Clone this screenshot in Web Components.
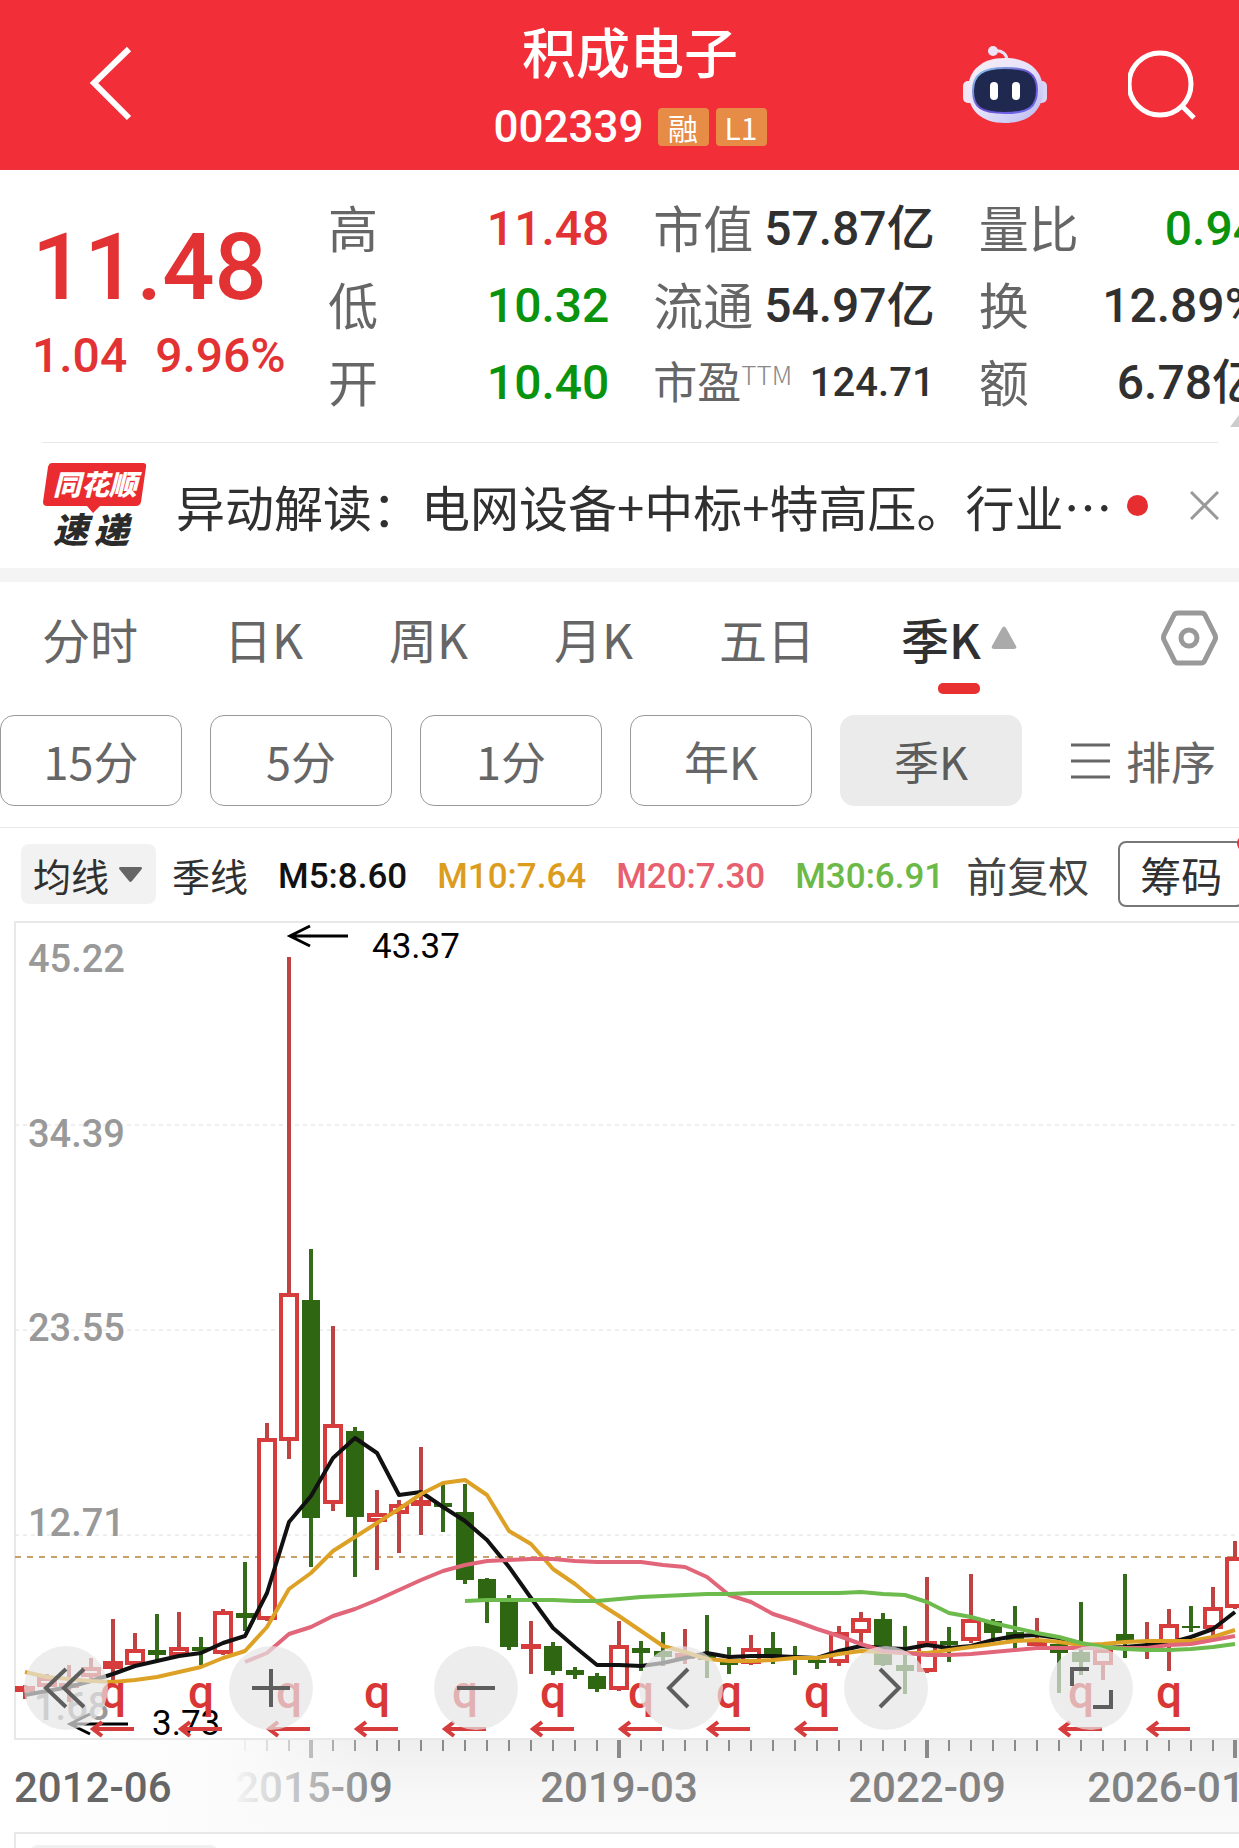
<!DOCTYPE html>
<html lang="zh-CN">
<head>
<meta charset="utf-8">
<meta name="viewport" content="width=device-width, initial-scale=1">
<title>积成电子 002339</title>
<style>
  :root {
    --cjk: "Noto Sans CJK SC", sans-serif;
    --num: Roboto, "Noto Sans CJK SC", sans-serif;
    --brand: #f22f38;
    --up: #e23234;
    --down: #0a930c;
    --ink: #303030;
    --muted: #666;
    --line: #e8e8e8;
  }

  body {
    margin: 0;
    height: 100vh;
    overflow: hidden;
    background: #fff;
    color: var(--ink);
    font-family: var(--cjk);
  }
</style>
</head>
<body>

<quote-header name="积成电子" code="002339">
  <span slot="badge">融</span>
  <span slot="badge">L1</span>
</quote-header>
<quote-board></quote-board>
<news-strip>异动解读：电网设备+中标+特高压。行业…</news-strip>
<period-tabs></period-tabs>
<period-chips></period-chips>
<ma-legend></ma-legend>
<kline-chart></kline-chart>
<time-axis></time-axis>
<sub-chart></sub-chart>

<script>
const RESET = `
  button {
    margin: 0;
    padding: 0;
    border: 0;
    background: none;
    color: inherit;
    font: inherit;
    white-space: nowrap;
    cursor: pointer;
  }
  svg { display: block; }
`;

class BaseElement extends HTMLElement {
  constructor() {
    super();
    this.attachShadow({ mode: 'open' });
  }

  connectedCallback() {
    this.shadowRoot.innerHTML = `<style>${RESET}${this.styles()}</style>${this.markup()}`;
  }

  styles() { return ''; }
  markup() { return ''; }
}

class QuoteHeader extends BaseElement {
  styles() {
    return `
      :host {
        display: grid;
        grid-template-columns: 1fr auto 1fr;
        align-items: center;
        box-sizing: border-box;
        height: 170px;
        padding: 0 43px 0 64px;
        background: var(--brand);
        color: #fff;
      }
      .back { justify-self: start; }
      .title { display: grid; justify-items: center; gap: 12px; }
      h1 { margin: 0; font-size: 54px; font-weight: 500; line-height: 72px; }
      .code { display: flex; align-items: center; gap: 7px; font: 500 44px/56px var(--num); }
      .code b { margin-right: 7px; font-weight: 500; }
      ::slotted(span) {
        min-width: 51px;
        border-radius: 4px;
        background: #e68c46;
        font: 400 30px/38px var(--cjk);
        text-align: center;
      }
      .actions { display: flex; justify-content: flex-end; gap: 81px; }
    `;
  }

  markup() {
    return `
      <button class="back" type="button" aria-label="返回">
        <svg width="94" height="100" viewBox="0 0 94 100" fill="none" stroke="#fff" stroke-width="6"><path d="M65 14 30 48l35 35"/></svg>
      </button>
      <div class="title">
        <h1>${this.getAttribute('name')}</h1>
        <div class="code"><b>${this.getAttribute('code')}</b><slot name="badge"></slot></div>
      </div>
      <div class="actions">
        <button type="button" aria-label="智能助手">
          <svg width="84" height="78" viewBox="0 0 84 78">
            <defs>
              <linearGradient id="shell" x1="0" y1="0" x2="1" y2="1">
                <stop offset="0" stop-color="#fbeef4"/><stop offset=".5" stop-color="#e4e2fa"/><stop offset="1" stop-color="#b9b8ee"/>
              </linearGradient>
              <linearGradient id="rim" x1="0" y1="0" x2="1" y2="1">
                <stop offset="0" stop-color="#8fd6ef"/><stop offset=".5" stop-color="#6a4fd0"/><stop offset="1" stop-color="#6d6cf0"/>
              </linearGradient>
            </defs>
            <path d="M31 5c8-1 13 3 13 10" fill="none" stroke="#efe2f3" stroke-width="3"/>
            <circle cx="30" cy="5" r="5" fill="#eee3f8"/>
            <rect x="0" y="35" width="12" height="22" rx="5" fill="#f1e6f4"/>
            <rect x="72" y="35" width="12" height="22" rx="5" fill="#d9d4f6"/>
            <path d="M42 12c24 0 38 13 38 32 0 20-14 33-38 33S5 64 5 44c0-19 13-32 37-32Z" fill="url(#shell)"/>
            <path d="M42 22c22 0 32 5 32 22 0 17-8 23-32 23S10 61 10 45c0-17 10-23 32-23Z" fill="#1f2950" stroke="url(#rim)" stroke-width="2"/>
            <rect x="27" y="36" width="8" height="18" rx="4" fill="#fff"/>
            <rect x="49" y="36" width="8" height="18" rx="4" fill="#fff"/>
          </svg>
        </button>
        <button type="button" aria-label="搜索">
          <svg width="68" height="70" viewBox="0 0 68 70" fill="none" stroke="#fff" stroke-width="5"><circle cx="32" cy="34" r="31"/><path d="m54 56 12 12"/></svg>
        </button>
      </div>
    `;
  }
}

const QUOTES = [
  ['高', '11.48', 'up'], ['市值', '57.87亿'], ['量比', '0.94', 'down'],
  ['低', '10.32', 'down'], ['流通', '54.97亿'], ['换', '12.89%'],
  ['开', '10.40', 'down'], ['市盈', '124.71', 'small'], ['额', '6.78亿'],
];

class QuoteBoard extends BaseElement {
  styles() {
    return `
      :host { display: block; overflow: hidden; }
      .board { display: flex; height: 272px; }
      .last {
        flex: 0 0 310px;
        box-sizing: border-box;
        padding: 48px 0 0 32px;
        color: var(--up);
        font: 500 48px/60px var(--num);
        white-space: nowrap;
      }
      .price { margin-bottom: 8px; font-size: 92px; line-height: 100px; }
      .change { display: flex; gap: 28px; }
      /* the third column runs past the edge of the screen */
      dl {
        flex: 1;
        display: grid;
        grid-template-columns: repeat(3, 1fr);
        column-gap: 44px;
        align-content: start;
        margin: 0 -21px 0 18px;
        padding-top: 20px;
      }
      dl div { display: flex; justify-content: space-between; align-items: center; height: 77px; white-space: nowrap; }
      dt { height: 77px; color: var(--muted); font-size: 50px; line-height: 72px; }
      dd { margin: 0; font: 500 48px/77px var(--num); }
      .up { color: var(--up); }
      .down { color: var(--down); }
      .small dt { display: flex; font-size: 44px; }
      .small dd { font-size: 40px; }
      .small sup { font-size: 26px; line-height: 60px; color: #888; font-weight: 300; }
      hr { margin: 0 21px 0 42px; border: 0; border-top: 1px solid var(--line); }
      .more { position: absolute; right: 0; top: 415px; }
    `;
  }

  markup() {
    const cells = QUOTES.map(([label, value, kind = '']) => `
      <div class="${kind}"><dt>${label}${kind === 'small' ? '<sup>TTM</sup>' : ''}</dt><dd class="${kind}">${value}</dd></div>
    `).join('');
    return `
      <div class="board">
        <div class="last">
          <div class="price">11.48</div>
          <div class="change"><span>1.04</span><span>9.96%</span></div>
        </div>
        <dl>${cells}</dl>
      </div>
      <svg class="more" width="9" height="12" viewBox="0 0 9 12"><path d="M9 0v12H0z" fill="#ccc"/></svg>
      <hr>
    `;
  }
}

class NewsStrip extends BaseElement {
  styles() {
    return `
      :host {
        display: flex;
        align-items: center;
        height: 125px;
        padding: 0 20px 0 42px;
        border-bottom: 14px solid #f4f4f4;
      }
      svg { flex: none; }
      svg text { font-family: var(--cjk); font-weight: 900; font-style: italic; }
      a {
        flex: 1;
        min-width: 0;
        margin-left: 29px;
        color: var(--ink);
        font-size: 49px;
        line-height: 72px;
        text-decoration: none;
        white-space: nowrap;
      }
      .dot { width: 21px; height: 21px; margin-right: 42px; border-radius: 50%; background: #e62e31; }
    `;
  }

  markup() {
    return `
      <svg width="105" height="90" viewBox="0 0 105 90" role="img" aria-label="同花顺速递">
        <path d="M10 2h91q4 0 3 4l-5 35q-1 4-5 4H58l-7 7-6-7H5q-4 0-4-4L6 6q1-4 4-4Z" fill="#ea2c30"/>
        <text x="11" y="34" font-size="28" fill="#fff">同花顺</text>
        <text x="11" y="82" font-size="35" fill="#2b2b2b">速</text>
        <text x="52" y="82" font-size="35" fill="#2b2b2b">递</text>
      </svg>
      <a href="#"><slot></slot></a>
      <span class="dot"></span>
      <button type="button" aria-label="关闭">
        <svg width="29" height="29" viewBox="0 0 29 29" stroke="#999" stroke-width="3"><path d="m1 1 27 27M28 1 1 28"/></svg>
      </button>
    `;
  }
}

class PeriodTabs extends BaseElement {
  styles() {
    return `
      :host { display: flex; align-items: start; padding: 26px 21px 0 42px; }
      nav { flex: 1; display: flex; gap: 86px; }
      nav button { display: grid; justify-items: center; gap: 15px; color: var(--muted); font-size: 48px; line-height: 60px; }
      nav button span { display: flex; align-items: center; gap: 10px; }
      nav button::after { content: ""; width: 42px; height: 11px; border-radius: 5px; }
      nav .active { color: var(--ink); font-weight: 500; }
      nav .active::after { background: #e93030; }
      .settings { margin-top: 2px; }
    `;
  }

  markup() {
    const tabs = ['分时', '日K', '周K', '月K', '五日'].map((name) => `<button type="button"><span>${name}</span></button>`).join('');
    return `
      <nav>
        ${tabs}
        <button class="active" type="button"><span>季K<svg width="26" height="24" viewBox="0 0 26 24"><path d="M11 2q2-3 4 0l10 18q1 3-2 3H3q-3 0-2-3Z" fill="#aaa"/></svg></span></button>
      </nav>
      <button class="settings" type="button" aria-label="设置">
        <svg width="57" height="56" viewBox="0 0 57 56" fill="none" stroke="#999" stroke-width="5"><path d="M17 3h23q3 0 4 2l10 20q1 3 0 5L44 50q-1 3-4 3H17q-3 0-4-3L3 30q-1-2 0-5L13 5q1-2 4-2Z"/><circle cx="28" cy="28" r="8"/></svg>
      </button>
    `;
  }
}

class PeriodChips extends BaseElement {
  styles() {
    return `
      :host {
        display: flex;
        align-items: center;
        gap: 28px;
        padding: 21px 23px 21px 0;
        border-bottom: 1px solid var(--line);
        color: var(--muted);
        font-size: 45px;
      }
      .chip {
        flex: 0 0 182px;
        height: 91px;
        box-sizing: border-box;
        border: 1px solid #999;
        border-radius: 14px;
      }
      .active { border-color: #ebebeb; background: #ebebeb; color: #5c5c5c; }
      .sort { flex: 1; display: flex; align-items: center; justify-content: flex-end; gap: 16px; }
    `;
  }

  markup() {
    return `
      ${['15分', '5分', '1分', '年K'].map((name) => `<button class="chip" type="button">${name}</button>`).join('')}
      <button class="chip active" type="button">季K</button>
      <button class="sort" type="button">
        <svg width="39" height="36" viewBox="0 0 39 36" stroke="#666" stroke-width="3"><path d="M0 2h39M0 18h39M0 34h39"/></svg>排序
      </button>
    `;
  }
}

class MaLegend extends BaseElement {
  styles() {
    return `
      :host { display: flex; align-items: center; height: 92px; padding-left: 21px; overflow: hidden; white-space: nowrap; }
      .kind {
        display: flex;
        align-items: center;
        gap: 10px;
        height: 60px;
        margin-right: 16px;
        padding: 0 14px 0 12px;
        border-radius: 8px;
        background: #f2f2f2;
        font-size: 38px;
      }
      .cycle { margin-right: 30px; font-size: 38px; }
      .ma { margin-right: 30px; padding-top: 6px; font: 500 35px/48px var(--num); }
      .adjust { margin: 0 29px 0 -8px; color: #444; font-size: 41px; }
      .chips {
        position: relative;
        flex: none;
        height: 66px;
        padding: 0 20px;
        border: 2px solid #777;
        border-radius: 8px;
        font-size: 41px;
      }
      .chips::after {
        content: "";
        position: absolute;
        right: -12px;
        top: -8px;
        width: 17px;
        height: 17px;
        border-radius: 50%;
        background: #f0303a;
      }
    `;
  }

  markup() {
    return `
      <button class="kind" type="button">均线<svg width="23" height="15" viewBox="0 0 23 15"><path d="M1 0h21q2 1 0 3L13 14q-2 2-3 0L1 3q-2-2 0-3Z" fill="#666"/></svg></button>
      <span class="cycle">季线</span>
      <span class="ma" style="color: #111">M5:8.60</span>
      <span class="ma" style="color: #dc9d1e">M10:7.64</span>
      <span class="ma" style="color: #e8606e">M20:7.30</span>
      <span class="ma" style="color: #6cb947">M30:6.91</span>
      <span class="adjust">前复权</span>
      <button class="chips" type="button">筹码</button>
    `;
  }
}

const STEP = 22;
const FIRST_X = 25;
const barX = (i) => FIRST_X + STEP * i;

// direction, high, body top, body bottom, low: all in chart units
const CANDLES = [
  ['u', 765, 766, 772, 779], ['u', 754, 757, 767, 768], ['u', 745, 763, 767, 782], ['u', 738, 747, 757, 759],
  ['u', 699, 741, 749, 763], ['u', 713, 729, 745, 746], ['d', 694, 730, 735, 740], ['u', 692, 727, 736, 737],
  ['d', 717, 727, 731, 745], ['u', 689, 691, 734, 735], ['d', 642, 693, 698, 711], ['u', 503, 518, 700, 701],
  ['u', 37, 373, 521, 539], ['d', 329, 380, 598, 647], ['u', 406, 504, 584, 591], ['d', 507, 511, 597, 657],
  ['u', 570, 593, 602, 650], ['u', 580, 584, 594, 633], ['u', 527, 580, 586, 615], ['d', 563, 583, 587, 612],
  ['d', 564, 592, 660, 664], ['d', 658, 659, 680, 703], ['d', 675, 680, 727, 730], ['u', 701, 724, 728, 754],
  ['d', 722, 726, 751, 755], ['d', 747, 750, 755, 759], ['d', 753, 756, 769, 772], ['u', 701, 725, 770, 771],
  ['d', 721, 728, 733, 751], ['d', 712, 731, 737, 746], ['u', 709, 733, 739, 744], ['d', 695, 735, 740, 758],
  ['d', 727, 741, 745, 754], ['u', 715, 728, 744, 745], ['d', 712, 728, 737, 744], ['d', 726, 737, 740, 755],
  ['d', 736, 740, 743, 749], ['u', 706, 712, 743, 746], ['u', 692, 698, 713, 728], ['d', 693, 699, 745, 746],
  ['d', 706, 745, 751, 774], ['u', 657, 721, 752, 753], ['d', 707, 721, 725, 742], ['u', 654, 699, 721, 723],
  ['d', 699, 701, 713, 720], ['d', 686, 712, 721, 729], ['u', 698, 720, 726, 728], ['d', 722, 724, 733, 773],
  ['d', 682, 732, 742, 755], ['u', 728, 729, 745, 760], ['d', 654, 714, 723, 738], ['u', 702, 724, 728, 739],
  ['u', 689, 704, 726, 751], ['d', 686, 706, 708, 712], ['u', 667, 687, 709, 716], ['u', 621, 637, 688, 689],
];

// each average starts at the bar where it has enough history
const AVERAGES = [
  { color: '#111', start: 0, ys: [775, 771, 767, 761, 754, 746, 741, 736, 733, 723, 716, 673, 602, 576, 538, 518, 533, 575, 572, 587, 601, 620, 647, 678, 708, 727, 745, 745, 746, 743, 738, 733, 737, 736, 736, 737, 738, 731, 726, 728, 729, 725, 728, 726, 720, 716, 715, 718, 724, 728, 727, 725, 723, 717, 709, 692] },
  { color: '#dda126', start: 0, ys: [752, 757, 759, 761, 762, 760, 757, 752, 747, 738, 731, 707, 669, 653, 631, 617, 603, 589, 574, 563, 560, 575, 611, 624, 649, 664, 682, 696, 711, 726, 732, 739, 741, 741, 740, 738, 738, 734, 731, 732, 733, 733, 730, 727, 724, 721, 720, 722, 725, 724, 722, 721, 721, 721, 717, 710] },
  { color: '#e2667a', start: 10, ys: [742, 733, 714, 707, 696, 689, 680, 670, 660, 651, 645, 641, 640, 639, 639, 641, 642, 642, 642, 645, 647, 657, 675, 682, 694, 701, 709, 716, 724, 731, 733, 735, 735, 734, 732, 730, 728, 728, 728, 728, 728, 728, 725, 724, 720, 716] },
  { color: '#6cbb4c', start: 20, ys: [681, 680, 680, 680, 680, 681, 681, 679, 677, 676, 675, 674, 674, 673, 673, 673, 673, 673, 672, 674, 675, 682, 693, 697, 703, 708, 713, 717, 723, 727, 729, 730, 730, 729, 727, 724] },
];

const PRICE_LABELS = [[28, 52, '45.22'], [28, 227, '34.39'], [28, 421, '23.55'], [28, 616, '12.71'], [34, 800, '1.68']];
const RIGHTS_BARS = [4, 8, 12, 16, 20, 24, 28, 32, 36, 48, 52];

function candle([dir, high, top, bottom, low], i) {
  const x = barX(i);
  if (dir === 'd') {
    return `<path d="M${x} ${high}V${low}" stroke="#356b1a" stroke-width="4"/><rect x="${x - 9}" y="${top}" width="18" height="${bottom - top}" fill="#2f6612"/>`;
  }
  const height = Math.max(bottom - top - 4, 1);
  return `<path d="M${x} ${high}V${top}M${x} ${bottom}V${low}" stroke="#be4444" stroke-width="4"/>
    <rect x="${x - 8}" y="${top + 2}" width="16" height="${height}" fill="#fff" stroke="#d63c3c" stroke-width="4"/>`;
}

function average({ color, start, ys }) {
  const points = ys.map((y, i) => `${barX(start + i)},${y}`).join(' ');
  return `<polyline points="${points}" fill="none" stroke="${color}" stroke-width="4" stroke-linejoin="round"/>`;
}

function rightsMark(i) {
  const x = barX(i);
  return `<text class="q" x="${x}" y="788">q</text><path d="M${x + 21} 809h-41M${x - 11} 802l-9 7 9 7" stroke="#d63c3c" stroke-width="4" fill="none"/>`;
}

const CONTROLS = [
  ['最早', 'M42 23 22 42l20 19M60 23 40 42l20 19'],
  ['放大', 'M23 42h38M42 23v38'],
  ['缩小', 'M23 42h38'],
  ['向左', 'M49 23 30 42l19 19'],
  ['向右', 'M36 23l19 19-19 19'],
  ['全屏', 'M40 23H23v17M62 44v17H44'],
];

class KlineChart extends BaseElement {
  styles() {
    return `
      :host { display: block; position: relative; }
      .plot { width: 100%; height: auto; }
      .price { fill: #999; font: 500 38px var(--num); }
      .extreme { fill: #000; font: 400 35px var(--num); }
      .q { fill: #d93636; font: 500 46px var(--num); text-anchor: middle; }
      /* zoom and pan buttons float over the plot */
      .controls {
        position: absolute;
        left: 24px;
        right: 106px;
        bottom: 10px;
        display: flex;
        justify-content: space-between;
      }
      .controls button { width: 84px; height: 84px; border-radius: 50%; background: rgba(230, 230, 230, 0.7); }
    `;
  }

  markup() {
    return `
      <svg class="plot" viewBox="0 0 1239 820">
        <path d="M1239 2H15v817h1224" fill="none" stroke="#e8e8e8" stroke-width="2"/>
        <path d="M15 205h1224M15 410h1224M15 615h1224" stroke="#dedede" stroke-width="1" stroke-dasharray="4 4"/>
        ${PRICE_LABELS.map(([x, y, text]) => `<text class="price" x="${x}" y="${y}">${text}</text>`).join('')}
        <path d="M15 637h1224" stroke="#c4a06a" stroke-width="2" stroke-dasharray="6 6"/>
        ${CANDLES.map(candle).join('')}
        ${AVERAGES.map(average).join('')}
        <g fill="none" stroke="#000" stroke-width="3">
          <path d="M348 16h-58M310 6l-20 10 20 10"/>
          <path d="M128 804H70M90 794l-20 10 20 10"/>
        </g>
        <text class="extreme" x="372" y="38">43.37</text>
        <text class="extreme" x="152" y="815">3.73</text>
        ${RIGHTS_BARS.map(rightsMark).join('')}
      </svg>
      <div class="controls">
        ${CONTROLS.map(([label, d]) => `<button type="button" aria-label="${label}"><svg width="84" height="84" viewBox="0 0 84 84" fill="none" stroke="#5e5e5e" stroke-width="4"><path d="${d}"/></svg></button>`).join('')}
      </div>
    `;
  }
}

class TimeAxis extends BaseElement {
  styles() {
    return `
      :host { display: block; }
      svg { width: 100%; height: auto; }
      text { fill: #828282; font: 500 42px var(--num); text-anchor: middle; }
      .first { fill: #666; text-anchor: start; }
    `;
  }

  markup() {
    const ticks = [];
    for (let i = 10; i < CANDLES.length; i++) {
      const major = (i - 13) % 14 === 0 || i === CANDLES.length - 1;
      ticks.push(`<path d="M${barX(i)} 0v${major ? 18 : 11}" stroke="#8a8a8a" stroke-width="${major ? 4 : 2}"/>`);
    }
    return `
      <svg viewBox="0 0 1239 92">
        <defs>
          <linearGradient id="shade" x1="0" y1="0" x2="0" y2="1">
            <stop offset="0" stop-color="#eee"/><stop offset=".6" stop-color="#f8f8f8"/><stop offset="1" stop-color="#fafafa"/>
          </linearGradient>
          <linearGradient id="fade">
            <stop offset="0" stop-color="#fff"/><stop offset=".6" stop-color="#fbfbfb"/><stop offset="1" stop-color="#fafafa" stop-opacity="0"/>
          </linearGradient>
        </defs>
        <rect width="1239" height="92" fill="url(#shade)"/>
        ${ticks.join('')}
        <text x="314" y="62">2015-09</text>
        <text x="619" y="62">2019-03</text>
        <text x="927" y="62">2022-09</text>
        <text x="1166" y="62">2026-01</text>
        <rect width="380" height="92" fill="url(#fade)"/>
        <text class="first" x="14" y="62">2012-06</text>
      </svg>
    `;
  }
}

class SubChart extends BaseElement {
  styles() {
    return `
      :host {
        display: block;
        margin-left: 14px;
        padding: 11px 14px;
        border: solid var(--line);
        border-width: 2px 0 0 2px;
      }
      .picker { width: 188px; height: 60px; border-radius: 8px; background: #f0f0f0; }
    `;
  }

  markup() {
    return '<div class="picker"></div>';
  }
}

customElements.define('quote-header', QuoteHeader);
customElements.define('quote-board', QuoteBoard);
customElements.define('news-strip', NewsStrip);
customElements.define('period-tabs', PeriodTabs);
customElements.define('period-chips', PeriodChips);
customElements.define('ma-legend', MaLegend);
customElements.define('kline-chart', KlineChart);
customElements.define('time-axis', TimeAxis);
customElements.define('sub-chart', SubChart);
</script>
</body>
</html>
